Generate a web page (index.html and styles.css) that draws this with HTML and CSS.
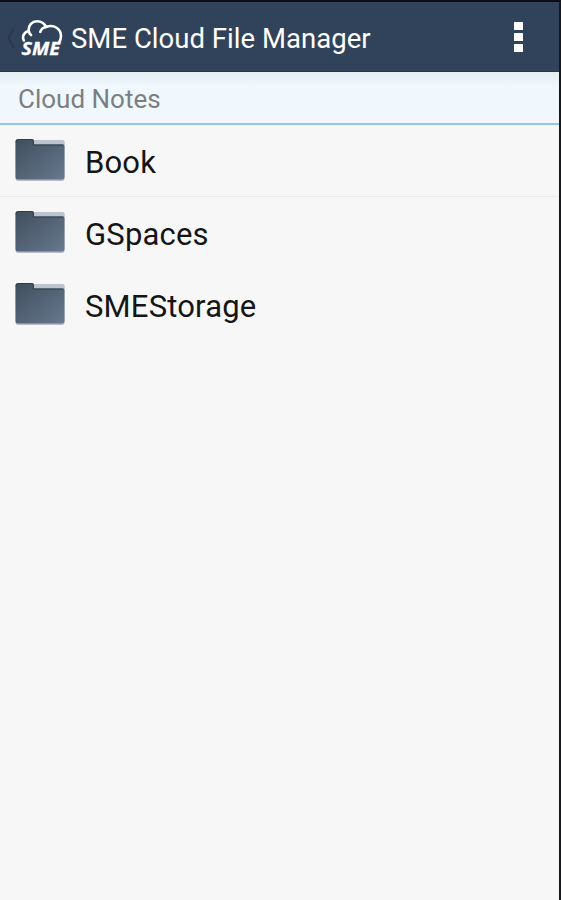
FILE: index.html
```
<!DOCTYPE html>
<html lang="en">
<head>
  <meta charset="UTF-8" />
  <title>SME Cloud File Manager</title>
  <link rel="stylesheet" href="styles.css">
</head>
<body>
  <svg class="defs" width="0" height="0">
    <defs>
      <linearGradient id="folderFill" x1="0" y1="0" x2="1" y2="1">
        <stop offset="0" stop-color="#3f4e5d" />
        <stop offset="1" stop-color="#68788e" />
      </linearGradient>
      <symbol id="folder" viewBox="0 0 50 44">
        <rect x="0.500" y="2" width="49" height="41" rx="2.500" fill="#b9bec6" />
        <path d="M18 2h29a2.500 2.500 0 0 1 2.500 2.500v6H18z" fill="#bcc3cc" />
        <path d="M0.500 3.500a2.500 2.500 0 0 1 2.500-2.500H17a2 2 0 0 1 2 2v3.500h28.500a2 2 0 0 1 2 2V39a2.500 2.500 0 0 1-2.500 2.500H3A2.500 2.500 0 0 1 .5 39z" fill="url(#folderFill)" />
        <path d="M1 4a2.500 2.500 0 0 1 2.500-2.500h13a1.800 1.800 0 0 1 1.800 1.800V7H48.500" fill="none" stroke="#2f3d4b" stroke-width="1" />
      </symbol>
    </defs>
  </svg>

  <div class="screen">
    <header class="topbar">
      <svg class="back" width="9" height="22" viewBox="0 0 9 22">
        <path d="M7.500 1.500L2.500 11l5 9.500" fill="none" stroke="#29384a" stroke-width="2" />
      </svg>
      <svg class="logo" width="44" height="40" viewBox="0 0 44 40">
        <path d="M2.800 22.500C0.800 18.500 3 14 7.800 13C7 7 11.500 3.200 16 3.200C20.500 3.200 23.500 5.500 25 9C33 6 40 11 40 18C40 20.500 39.300 22.500 38 24.500M7.800 13C8 14.800 8.700 16 10 17M25 9C22 9.600 20 11.200 19.300 13.800" fill="none" stroke="#fff" stroke-width="2.600" stroke-linecap="round" />
        <text class="logo-text" x="0.500" y="36.500" textLength="38.500" lengthAdjust="spacingAndGlyphs">SME</text>
      </svg>
      <h1>SME Cloud File Manager</h1>
      <button class="menu" aria-label="Menu">
        <span></span>
        <span></span>
        <span></span>
      </button>
    </header>

    <div class="path">Cloud Notes</div>

    <ul class="list">
      <li class="item line">
        <svg class="folder"><use href="#folder" /></svg>
        <span class="name">Book</span>
      </li>
      <li class="item">
        <svg class="folder"><use href="#folder" /></svg>
        <span class="name">GSpaces</span>
      </li>
      <li class="item">
        <svg class="folder"><use href="#folder" /></svg>
        <span class="name">SMEStorage</span>
      </li>
    </ul>
  </div>
</body>
</html>
```
FILE: styles.css
```
* {
  box-sizing: border-box;
}

body {
  margin: 0;
  background: #f7f7f7;
  font-family: Roboto, sans-serif;
}

.defs {
  display: block;
}

.screen {
  height: 900px;
  border-top: 2px solid #0b0e17;
  border-right: 2px solid #16181c;
}

.topbar {
  height: 70px;
  display: flex;
  align-items: flex-start;
  padding: 0 36px 0 6px;
  background: #31435a;
  border-bottom: 1px solid #27364a;
}

.back {
  margin-top: 25px;
}

.logo {
  margin: 16px 0 0 6px;
}

.logo-text {
  font-family: "Open Sans", sans-serif;
  font-size: 18px;
  font-weight: 700;
  font-style: italic;
  fill: #fff;
  stroke: #fff;
  stroke-width: 0.3px;
}

h1 {
  flex: 1;
  margin: 0 0 0 6px;
  font-size: 27.5px;
  font-weight: 400;
  line-height: 74px;
  letter-spacing: 0.03px;
  color: #fff;
  white-space: nowrap;
}

.menu {
  display: flex;
  flex-direction: column;
  gap: 3px;
  margin-top: 20px;
  padding: 0;
  border: none;
  background: none;
}

.menu span {
  width: 9px;
  height: 8px;
  background: #fff;
}

.path {
  height: 53px;
  padding-left: 18px;
  font-size: 26px;
  line-height: 54px;
  color: #7c7f82;
  background: linear-gradient(#e3edf4, #f0f8fe 14px);
  border-bottom: 2px solid #94c6e6;
}

.list {
  margin: 0;
  padding: 0;
  list-style: none;
}

.item {
  height: 72px;
  display: flex;
  align-items: flex-start;
  padding: 13px 0 0 15px;
}

.line {
  border-bottom: 1px solid #ececec;
}

.folder {
  width: 50px;
  height: 44px;
}

.name {
  margin-left: 20px;
  font-size: 31px;
  line-height: 50px;
  letter-spacing: 0.18px;
  color: #151515;
}
```
